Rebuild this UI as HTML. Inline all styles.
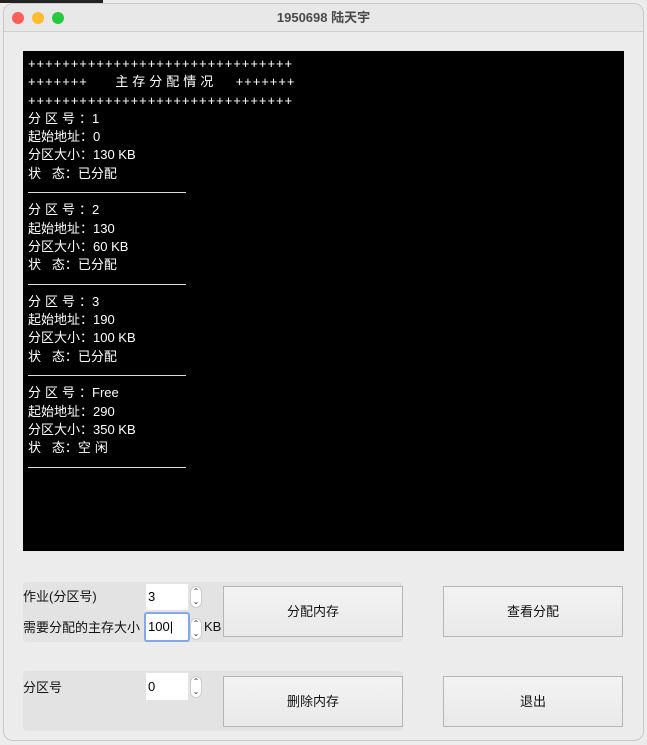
<!DOCTYPE html>
<html><head><meta charset="utf-8"><style>
*{margin:0;padding:0;box-sizing:border-box}
body{width:647px;height:745px;background:#ececec;position:relative;overflow:hidden;font-family:"Liberation Sans","Noto Sans CJK SC",sans-serif}
.win{position:absolute;left:3px;top:3px;width:641px;height:738px;background:#ececec;border:1px solid #c8c8c8;border-radius:10px;overflow:hidden}
.tb{height:28px;background:#e9e8e8;border-bottom:1px solid #d0d0d0;text-align:center;font-size:13px;font-weight:bold;color:#4a4a4a;line-height:28px}
.dot{position:absolute;top:8px;width:12px;height:12px;border-radius:50%}
.term{position:absolute;left:19px;top:47px;width:601px;height:500px;background:#000;color:#fff;font-size:13px;padding:4px 5px;line-height:18.3px}
.term .p{letter-spacing:0.96px}
.sep{height:18.3px;position:relative}
.sep:after{content:"";position:absolute;left:0;top:9px;width:158px;border-top:1px solid #ddd}
.s{letter-spacing:4px}
.grp{position:absolute;left:19px;width:380px;height:60px;background:#e3e3e3;border-radius:4px}
.lbl{position:absolute;font-size:13px;color:#111}
.spin{position:absolute;background:#fff;font-size:13px;padding-left:2px;color:#000}
.arr{position:absolute;width:12px;height:22px;background:#fff;border-radius:6px;font-size:8px;line-height:10px;text-align:center;color:#333;border:1px solid #ccc}
.btn{position:absolute;width:180px;height:51px;border:1px solid #b5b5b5;background:linear-gradient(#f3f3f3,#e9e9e9);font-size:13px;text-align:center;line-height:50px;color:#111}
</style></head><body>
<div style="position:absolute;left:0;top:0;width:103px;height:3px;background:#222"></div>
<div class="win">
<div class="tb">1950698 陆天宇</div>
<div class="dot" style="left:8px;background:#fe5f57"></div>
<div class="dot" style="left:28px;background:#febc2e"></div>
<div class="dot" style="left:48px;background:#28c840"></div>
<div class="term">
<div class="p">+++++++++++++++++++++++++++++++</div>
<div class="p">+++++++&nbsp;&nbsp;&nbsp;&nbsp;&nbsp;&nbsp;<span class="s">主存分配情况</span>&nbsp;&nbsp;&nbsp;&nbsp;+++++++</div>
<div class="p">+++++++++++++++++++++++++++++++</div>
<div><span class="s">分区号</span>：1</div><div>起始地址：0</div><div>分区大小：130 KB</div><div>状&nbsp;&nbsp;&nbsp;态：已分配</div><div class="sep"></div>
<div><span class="s">分区号</span>：2</div><div>起始地址：130</div><div>分区大小：60 KB</div><div>状&nbsp;&nbsp;&nbsp;态：已分配</div><div class="sep"></div>
<div><span class="s">分区号</span>：3</div><div>起始地址：190</div><div>分区大小：100 KB</div><div>状&nbsp;&nbsp;&nbsp;态：已分配</div><div class="sep"></div>
<div><span class="s">分区号</span>：Free</div><div>起始地址：290</div><div>分区大小：350 KB</div><div>状&nbsp;&nbsp;&nbsp;态：<span class="s">空闲</span></div><div class="sep"></div>
</div>
<div class="grp" style="top:578px"></div>
<div class="lbl" style="left:19px;top:582px">作业(分区号)</div>
<div class="lbl" style="left:19px;top:613px">需要分配的主存大小</div>
<div class="spin" style="left:142px;top:580px;width:42px;height:26px;line-height:26px">3</div>
<div class="arr" style="left:186px;top:582px">⌃<br>⌄</div>
<div class="spin" style="left:140px;top:608px;width:46px;height:30px;line-height:26px;border:2px solid #82a8e8;border-radius:3px">100|</div>
<div class="arr" style="left:186px;top:614px">⌃<br>⌄</div>
<div class="lbl" style="left:200px;top:615px">KB</div>
<div class="btn" style="left:219px;top:582px">分配内存</div>
<div class="btn" style="left:439px;top:582px">查看分配</div>
<div class="grp" style="top:667px"></div>
<div class="lbl" style="left:19px;top:673px">分区号</div>
<div class="spin" style="left:142px;top:669px;width:42px;height:27px;line-height:27px">0</div>
<div class="arr" style="left:186px;top:672px">⌃<br>⌄</div>
<div class="btn" style="left:219px;top:672px">删除内存</div>
<div class="btn" style="left:439px;top:672px">退出</div>
</div>
</body></html>
